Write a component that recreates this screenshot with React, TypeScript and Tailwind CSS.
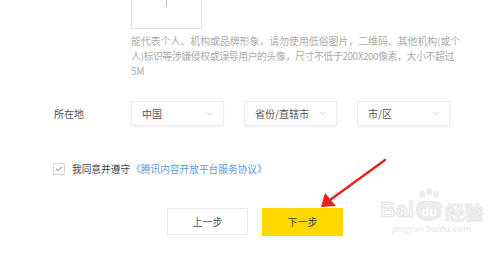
import { ChevronDown, Check } from "lucide-react";

const cjk = { fontFamily: '"Noto Sans CJK SC", "Noto Sans", sans-serif' };

const Select = ({ label }: { label: string }) => (
  <div className="flex items-center justify-between w-[93px] h-[25px] pl-[10px] pr-[10px] border border-[#ececec] shadow-[0_1px_2px_rgba(0,0,0,0.05)] bg-white">
    <span className="text-[10px] leading-none text-[#555]">{label}</span>
    <ChevronDown className="w-[7px] h-[7px] text-[#c8c8c8]" strokeWidth={3} />
  </div>
);

const Watermark = () => (
  <div className="absolute left-[380px] top-[199px] flex flex-col items-center select-none">
    <div className="flex items-end leading-none">
      <span className="text-[22px] font-bold text-[#f6f6f6] [-webkit-text-stroke:1px_#e6e6e6]" style={{ fontFamily: '"Liberation Sans", sans-serif' }}>
        Bai
      </span>
      <span className="relative ml-[2px] flex items-center justify-center w-[26px] h-[20px] rounded-b-[10px] rounded-t-[6px] bg-[#ececec]">
        <span className="absolute -top-[10px] left-[3px] w-[6px] h-[7px] rounded-full bg-[#ececec]" />
        <span className="absolute -top-[13px] left-[10px] w-[6px] h-[7px] rounded-full bg-[#ececec]" />
        <span className="absolute -top-[10px] left-[17px] w-[6px] h-[7px] rounded-full bg-[#ececec]" />
        <span className="text-[13px] font-bold text-white" style={{ fontFamily: '"Liberation Sans", sans-serif' }}>du</span>
      </span>
      <span className="ml-[3px] text-[19px] font-bold text-[#f6f6f6] [-webkit-text-stroke:1px_#e6e6e6]" style={cjk}>
        经验
      </span>
    </div>
    <span className="mt-[4px] text-[9px] leading-none font-bold text-[#ececec]" style={{ fontFamily: '"Liberation Sans", sans-serif' }}>
      jingyan.baidu.com
    </span>
  </div>
);

const Arrow = () => (
  <svg className="absolute left-0 top-0 pointer-events-none" width="500" height="253" viewBox="0 0 500 253">
    <line x1="385" y1="160" x2="330" y2="200" stroke="#e5231b" strokeWidth="2.4" strokeLinecap="round" />
    <polygon points="321,207 325,193 336,206" fill="#e5231b" />
  </svg>
);

export default function App() {
  return (
    <div className="relative w-[500px] h-[253px] overflow-hidden bg-white" style={cjk}>
      {/* avatar upload + hint */}
      <div className="pl-[131px]">
        <div className="relative -mt-[31px] w-[71px] h-[60px] border border-[#e2e2e2] flex items-center justify-center">
          <span className="absolute left-[34px] top-[22px] w-px h-[15px] bg-[#bdbdbd]" />
          <span className="absolute left-[27px] top-[29px] w-[15px] h-px bg-[#bdbdbd]" />
        </div>
        <p className="mt-[5px] text-[9.9px] leading-[15px] text-[#ababab] whitespace-nowrap">
          能代表个人、机构或品牌形象，请勿使用低俗图片，二维码、其他机构(或个
          <br />
          <span className="tracking-[-0.4px]">人)标识等涉嫌侵权或误导用户的头像，尺寸不低于200X200像素，大小不超过</span>
          <br />
          5M
        </p>
      </div>

      {/* location */}
      <div className="mt-[22px] flex items-center pl-[54px]">
        <span className="w-[77px] text-[10px] text-[#555]">所在地</span>
        <div className="flex gap-[20px]">
          <Select label="中国" />
          <Select label="省份/直辖市" />
          <Select label="市/区" />
        </div>
      </div>

      {/* agreement */}
      <div className="mt-[36px] flex items-center pl-[53px]">
        <span className="flex items-center justify-center w-[12px] h-[12px] border border-[#d6d6d6] bg-white">
          <Check className="w-[8px] h-[8px] text-[#777]" strokeWidth={3} />
        </span>
        <span className="ml-[7px] text-[9.7px] text-[#444]">我同意并遵守</span>
        <span className="ml-[1px] text-[9.7px] text-[#5d9be0]">《腾讯内容开放平台服务协议》</span>
      </div>

      {/* buttons */}
      <div className="mt-[31px] flex gap-[14px] pl-[167px]">
        <button className="w-[81px] h-[27px] border border-[#ebebeb] bg-white text-[10px] text-[#555]">上一步</button>
        <button className="w-[81px] h-[28px] bg-[#ffd800] text-[10px] text-[#444] shadow-[0_1px_2px_rgba(0,0,0,0.08)]">下一步</button>
      </div>

      <Arrow />
      <Watermark />
    </div>
  );
}
